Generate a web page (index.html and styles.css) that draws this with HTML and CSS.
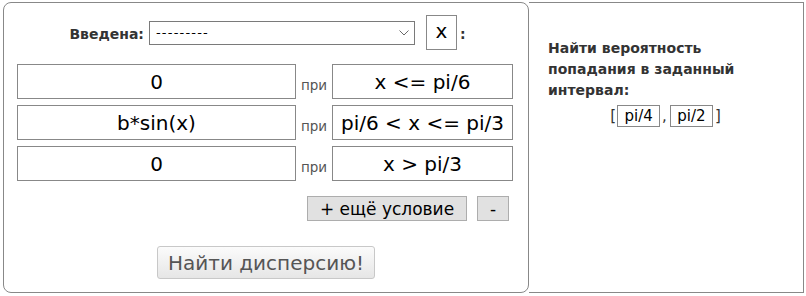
FILE: index.html
```html
<!DOCTYPE html>
<html>
<head>
<meta charset="utf-8">
<link rel="stylesheet" href="styles.css">
</head>
<body>
<div class="wrap">
  <div class="main">
    <div class="head">
      <span class="lbl">Введена:</span>
      <span class="selwrap">
        <select class="sel"><option>---------</option></select>
        <svg class="chev" width="10" height="6" viewBox="0 0 10 6"><path d="M0.5 0.5 L5 5 L9.5 0.5" fill="none" stroke="#6a6a6a" stroke-width="1"/></svg>
      </span>
      <span class="var">x</span>
      <span class="colon">:</span>
    </div>
    <div class="rows">
      <input class="fn" value="0">
      <span class="pri">при</span>
      <input class="cond" value="x &lt;= pi/6">
      <input class="fn" value="b*sin(x)">
      <span class="pri">при</span>
      <input class="cond" value="pi/6 &lt; x &lt;= pi/3">
      <input class="fn" value="0">
      <span class="pri">при</span>
      <input class="cond" value="x &gt; pi/3">
    </div>
    <div class="btns">
      <button class="sbtn add">+ ещё условие</button>
      <button class="sbtn rem">-</button>
    </div>
    <div class="go">
      <button class="big">Найти дисперсию!</button>
    </div>
  </div>
  <div class="side">
    <div class="title">Найти вероятность попадания в заданный интервал:</div>
    <div class="range">[<input class="lim" value="pi/4">,<input class="lim lim2" value="pi/2">]</div>
  </div>
</div>
</body>
</html>
```
FILE: styles.css
```css
html, body {
  margin: 0;
  padding: 0;
  background: #fff;
  font-family: "DejaVu Sans", Verdana, sans-serif;
}
.wrap {
  display: flex;
  margin: 2px 0 0 3px;
  height: 291px;
}
.main {
  box-sizing: border-box;
  width: 526px;
  height: 291px;
  border: 1px solid #888;
  border-radius: 8px;
  padding: 12px 14px 0 13px;
}
.head {
  display: flex;
  align-items: center;
  justify-content: center;
  height: 35px;
  padding-left: 4px;
}
.lbl {
  font-weight: bold;
  font-size: 14px;
  color: #333;
  margin-right: 5px;
  padding-top: 2px;
}
.selwrap {
  position: relative;
  display: inline-block;
  height: 24px;
}
.sel {
  -webkit-appearance: none;
  appearance: none;
  box-sizing: border-box;
  width: 266px;
  height: 24px;
  font-family: "DejaVu Sans", Verdana, sans-serif;
  font-size: 13px;
  letter-spacing: 1.2px;
  border: 1px solid #7a7a7a;
  border-radius: 0;
  background: #fff;
  color: #000;
  padding: 0 6px;
  margin: 0;
  display: block;
}
.chev {
  position: absolute;
  right: 6px;
  top: 9px;
}
.var {
  box-sizing: border-box;
  width: 31px;
  height: 35px;
  border: 1px solid #888;
  margin-left: 11px;
  font-size: 20px;
  text-align: center;
  line-height: 31px;
}
.colon {
  font-weight: bold;
  font-size: 14px;
  color: #333;
  margin-left: 3px;
  padding-top: 2px;
}
.rows {
  margin-top: 14px;
  display: grid;
  grid-template-columns: 279px 36px 181px;
  row-gap: 6px;
  align-items: center;
}
.rows input {
  box-sizing: border-box;
  height: 35px;
  border: 1px solid #888;
  font-family: "DejaVu Sans", Verdana, sans-serif;
  font-size: 20px;
  text-align: center;
  padding: 0;
  margin: 0;
  color: #000;
  width: 100%;
}
.pri {
  font-size: 13.5px;
  color: #555;
  text-align: center;
  padding-top: 6px;
}
.btns {
  margin-top: 15px;
  display: flex;
  justify-content: flex-end;
  padding-right: 5px;
  gap: 10px;
}
.sbtn {
  box-sizing: border-box;
  height: 25px;
  background: #e1e1e1;
  border: 1px solid #adadad;
  border-radius: 0;
  font-family: "DejaVu Sans", Verdana, sans-serif;
  font-size: 17px;
  color: #000;
  padding: 0;
  margin: 0;
}
.add { width: 160px; }
.rem { width: 32px; }
.go {
  margin-top: 25px;
  display: flex;
  justify-content: center;
}
.big {
  box-sizing: border-box;
  width: 218px;
  height: 33px;
  border: 1px solid #c8c8c8;
  border-radius: 3px;
  background: linear-gradient(#fbfbfb, #e6e6e6);
  font-family: "DejaVu Sans", Verdana, sans-serif;
  font-size: 20px;
  color: #555;
  padding: 0;
  margin: 0 0 0 1px;
}
.side {
  box-sizing: border-box;
  width: 275px;
  height: 291px;
  border: 1px solid #888;
  border-left: none;
  padding: 35px 20px 0 19px;
}
.title {
  font-weight: bold;
  font-size: 14px;
  color: #333;
  line-height: 21px;
  width: 225px;
}
.range {
  margin-top: 4px;
  text-align: center;
  font-size: 15px;
  color: #333;
}
.lim {
  box-sizing: border-box;
  width: 43px;
  height: 22px;
  border: 1px solid #888;
  font-family: "DejaVu Sans", Verdana, sans-serif;
  font-size: 15px;
  text-align: center;
  padding: 0;
  margin: 0 2px 0 1px;
  color: #000;
  vertical-align: middle;
}
.lim2 { margin-left: 3px; }
```
